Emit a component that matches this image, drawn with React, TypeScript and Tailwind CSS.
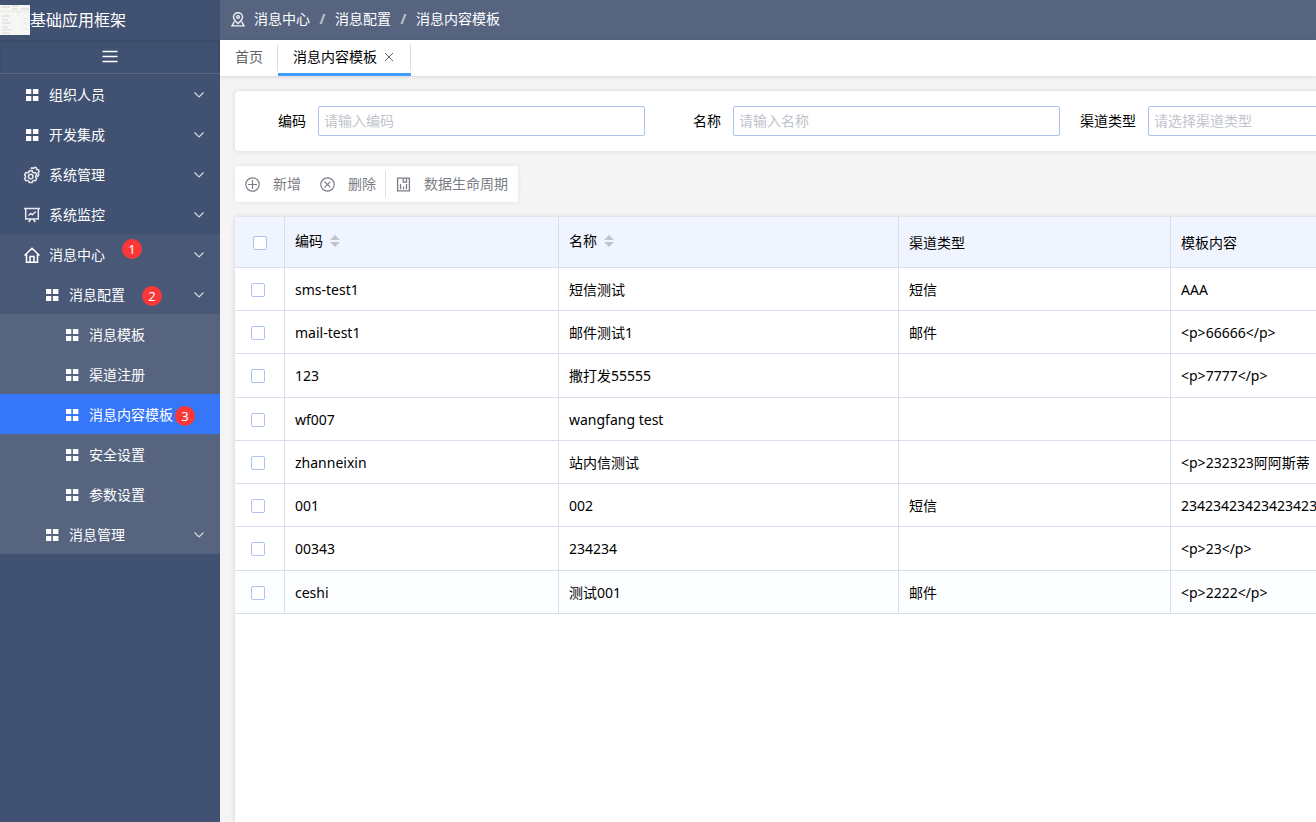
import React from 'react';

type IconName = 'grid' | 'gears' | 'monitor' | 'home';

interface MenuItem {
  label: string;
  icon: IconName;
  level: 1 | 2 | 3;
  tone: 'base' | 'open' | 'sub' | 'active';
  expandable?: boolean;
  badge?: number;
  badgeClass?: string;
}

const menu: MenuItem[] = [
  { label: '组织人员', icon: 'grid', level: 1, tone: 'base', expandable: true },
  { label: '开发集成', icon: 'grid', level: 1, tone: 'base', expandable: true },
  { label: '系统管理', icon: 'gears', level: 1, tone: 'base', expandable: true },
  { label: '系统监控', icon: 'monitor', level: 1, tone: 'base', expandable: true },
  { label: '消息中心', icon: 'home', level: 1, tone: 'open', expandable: true, badge: 1, badgeClass: 'left-[122px] top-[5px]' },
  { label: '消息配置', icon: 'grid', level: 2, tone: 'open', expandable: true, badge: 2, badgeClass: 'left-[142px] top-3' },
  { label: '消息模板', icon: 'grid', level: 3, tone: 'sub' },
  { label: '渠道注册', icon: 'grid', level: 3, tone: 'sub' },
  { label: '消息内容模板', icon: 'grid', level: 3, tone: 'active', badge: 3, badgeClass: 'left-[175px] top-3' },
  { label: '安全设置', icon: 'grid', level: 3, tone: 'sub' },
  { label: '参数设置', icon: 'grid', level: 3, tone: 'sub' },
  { label: '消息管理', icon: 'grid', level: 2, tone: 'sub', expandable: true },
];

const toneClass = {
  base: '',
  open: 'bg-[#485876]',
  sub: 'bg-[#566480]',
  active: 'bg-[#3577f8]',
};

const indentClass = { 1: 'pl-6', 2: 'pl-11', 3: 'pl-16' };

const rows = [
  { code: 'sms-test1', name: '短信测试', channel: '短信', content: 'AAA' },
  { code: 'mail-test1', name: '邮件测试1', channel: '邮件', content: '<p>66666</p>' },
  { code: '123', name: '撒打发55555', channel: '', content: '<p>7777</p>' },
  { code: 'wf007', name: 'wangfang test', channel: '', content: '' },
  { code: 'zhanneixin', name: '站内信测试', channel: '', content: '<p>232323阿阿斯蒂' },
  { code: '001', name: '002', channel: '短信', content: '23423423423423423' },
  { code: '00343', name: '234234', channel: '', content: '<p>23</p>' },
  { code: 'ceshi', name: '测试001', channel: '邮件', content: '<p>2222</p>' },
];

const MenuIcon = ({ name }: { name: IconName }) => {
  if (name === 'grid') {
    return (
      <svg viewBox="0 0 16 16" className="h-4 w-4 shrink-0" fill="#fff">
        <path d="M2 2h5.300v5H2zM8.900 2h5.500v5H8.900zM2 9h5.300v5H2zM8.900 9h5.500v5H8.900z" />
      </svg>
    );
  }
  if (name === 'gears') {
    return (
      <svg viewBox="0 0 16 16" className="h-4 w-4 shrink-0 overflow-visible" fill="none" stroke="#e8eaee" strokeWidth="1.5" strokeLinejoin="round">
        <path d="M5.200 3.800h3l.4 1.400 1.300.7 1.500-.4 1.300 2.300-1 1.200v1.300l1 1.200-1.300 2.300-1.500-.4-1.300.7-.4 1.400h-3l-.4-1.400-1.300-.7-1.500.4L.5 11.500l1-1.200V9L.5 7.800 1.800 5.500l1.500.4 1.500-.7z" />
        <circle cx="6.700" cy="9.600" r="2.300" />
        <path d="M6.800 2l1-1.200 1.500.7L10.900.300l1.600.7.300 1.600 1.900.5.300 1.800-1.100 1.200.9 1.600-.8 1.500-1.500.200" />
      </svg>
    );
  }
  if (name === 'monitor') {
    return (
      <svg viewBox="0 0 16 16" className="h-4 w-4 shrink-0" fill="none" stroke="#e8eaee" strokeWidth="1.5">
        <path d="M0 1.500h16M1.700 1.500v10.500h12.600V1.500M4.500 8.500l2.300-2 1.500 1.200L11.800 4.500M7 12l-2.300 3M9 12l2.300 3" />
      </svg>
    );
  }
  return (
    <svg viewBox="0 0 16 16" className="h-4 w-4 shrink-0" fill="none" stroke="#fff" strokeWidth="1.5">
      <path d="M.5 8.500L8 1.200l7.500 7.300M2.500 7v8.200h11V7M6 15V9.500h4V15" />
    </svg>
  );
};

const SortIcon = () => (
  <svg viewBox="0 0 10 12" className="h-3 w-[10px]" fill="#c0c4cc">
    <path d="M0 5L5 0l5 5zM0 7h10l-5 5z" />
  </svg>
);

const Checkbox = ({ label, className = '' }: { label: string; className?: string }) => (
  <input
    type="checkbox"
    aria-label={label}
    className={`block h-[14px] w-[14px] appearance-none rounded-[2px] border border-[#adc2ec] bg-white checked:bg-[#409eff] ${className}`}
  />
);

const Sidebar = () => (
  <aside className="flex w-[220px] shrink-0 flex-col bg-[#405172] text-white">
    <div className="flex h-10 items-center">
      <svg viewBox="0 0 30 30" className="h-[30px] w-[30px]">
        <rect width="30" height="30" fill="#f6f6f5" />
        <path d="M1 2h9M12 1h6M12 4h5M21 4h8" stroke="#dedfdd" strokeWidth="1.5" />
        <path d="M0 6.500h30" stroke="#e6ebe6" />
        <path d="M2 11h8M2 15h6M2 18h9M2 22h6M2 25h10M2 28h7" stroke="#d6d6d6" />
        <path d="M16 8h4M22 14h6M22 19h6M22 24h6" stroke="#ebebea" />
      </svg>
      <span className="text-base leading-5">基础应用框架</span>
    </div>
    <button aria-label="折叠菜单" className="flex h-[34px] items-center justify-center border-b border-[#566582] shadow-[inset_0_2px_3px_rgba(0,0,0,0.08)]">
      <svg viewBox="0 0 16 14" className="h-[14px] w-4" stroke="#fff" strokeWidth="1.4">
        <path d="M0.500 1.500h15M0.500 6.500h15M0.500 11.500h15" />
      </svg>
    </button>
    <nav>
      {menu.map((item) => (
        <a
          key={item.label}
          href="#"
          className={`relative flex h-10 items-center gap-[9px] pr-4 pt-px text-sm ${indentClass[item.level]} ${toneClass[item.tone]}`}
        >
          <MenuIcon name={item.icon} />
          <span>{item.label}</span>
          {item.badge && (
            <span className={`absolute flex h-5 w-5 items-center justify-center rounded-full bg-[#fb3838] text-[13px] leading-5 ${item.badgeClass}`}>
              {item.badge}
            </span>
          )}
          {item.expandable && (
            <svg viewBox="0 0 10 6" className="ml-auto h-[6px] w-[10px]" fill="none" stroke="#d5dae2" strokeWidth="1.2">
              <path d="M.5.500L5 5l4.500-4.500" />
            </svg>
          )}
        </a>
      ))}
    </nav>
  </aside>
);

const Breadcrumb = () => (
  <header className="flex h-10 shrink-0 items-center bg-[#566480] pb-0.5 pl-[11px] text-sm text-white">
    <svg viewBox="0 0 14 15" className="mr-[9px] h-[15px] w-[14px]" fill="none" stroke="#eef0f3" strokeWidth="1.4">
      <path d="M7 11.500C4.500 9.500 2.500 7.500 2.500 5a4.500 4.300 0 0 1 9 0c0 2.500-2 4.500-4.500 6.500z" />
      <circle cx="7" cy="5" r="1.400" />
      <path d="M3.500 9.500L.9 13.900h12.200L10.500 9.500" />
    </svg>
    <a href="#">消息中心</a>
    <span className="w-[25px] text-center font-bold text-[#c0c4cc]">/</span>
    <a href="#">消息配置</a>
    <span className="w-[25px] text-center font-bold text-[#c0c4cc]">/</span>
    <span>消息内容模板</span>
  </header>
);

const TabBar = () => (
  <div className="relative flex h-9 shrink-0 bg-white text-sm shadow-[0_1px_4px_rgba(0,0,0,0.12)]">
    <button className="flex items-center border-b-[3px] border-transparent pl-[15px] pr-[14px] text-[#606266]">首页</button>
    <span className="mt-[5px] h-[26px] w-px bg-[#d8dce5]" />
    <div className="flex items-center border-b-[3px] border-[#409eff]">
      <button className="px-[15px] text-black">消息内容模板</button>
      <button aria-label="关闭" className="-ml-2 mr-4">
        <svg viewBox="0 0 10 10" className="h-[10px] w-[10px]" stroke="#5f6368" strokeWidth="1">
          <path d="M1 1l8 8M9 1L1 9" />
        </svg>
      </button>
      <span className="h-[26px] w-px bg-[#d8dce5]" />
    </div>
  </div>
);

const SearchForm = () => (
  <form className="flex h-[60px] items-center rounded bg-white text-sm shadow-[0_0_5px_rgba(0,0,0,0.12)]">
    <div className="flex w-[415px] shrink-0 items-center">
      <label htmlFor="code" className="w-[83px] pr-3 text-right text-black">编码</label>
      <input id="code" placeholder="请输入编码" className="h-[30px] w-[327px] rounded-[2px] border border-[#adc2ec] px-[5px] pb-0.5 placeholder:text-[#c0c4cc]" />
    </div>
    <div className="flex w-[415px] shrink-0 items-center">
      <label htmlFor="name" className="w-[83px] pr-3 text-right text-black">名称</label>
      <input id="name" placeholder="请输入名称" className="h-[30px] w-[327px] rounded-[2px] border border-[#adc2ec] px-[5px] pb-0.5 placeholder:text-[#c0c4cc]" />
    </div>
    <div className="flex w-[415px] shrink-0 items-center">
      <label htmlFor="channel" className="w-[83px] pr-3 text-right text-black">渠道类型</label>
      <select id="channel" defaultValue="" className="h-[30px] w-[327px] appearance-none rounded-[2px] border border-[#adc2ec] px-[5px] text-[#c0c4cc]">
        <option value="">请选择渠道类型</option>
        <option value="sms">短信</option>
        <option value="mail">邮件</option>
      </select>
    </div>
  </form>
);

const Toolbar = () => (
  <div className="flex h-9 w-max items-center rounded-[2px] bg-white px-[10px] text-sm text-[#7b7d85] shadow-[0_0_5px_rgba(0,0,0,0.08)]">
    <button className="flex items-center gap-[13px]">
      <svg viewBox="0 0 15 15" className="h-[15px] w-[15px]" fill="none" stroke="currentColor" strokeWidth="1.2">
        <circle cx="7.500" cy="7.500" r="6.700" />
        <path d="M7.500 3v9M3 7.500h9" />
      </svg>
      新增
    </button>
    <button className="ml-[19px] flex items-center gap-[13px]">
      <svg viewBox="0 0 15 15" className="h-[15px] w-[15px]" fill="none" stroke="currentColor" strokeWidth="1.2">
        <circle cx="7.500" cy="7.500" r="6.700" />
        <path d="M4.600 4.600l5.800 5.800M10.400 4.600l-5.800 5.800" />
      </svg>
      删除
    </button>
    <span className="ml-[9px] mr-[10px] h-[26px] w-px bg-[#d6dfeb]" />
    <button className="flex items-center gap-[13px]">
      <svg viewBox="0 0 15 15" className="h-[15px] w-[15px]" fill="none" stroke="currentColor" strokeWidth="1.3">
        <path d="M1.600 1.200h11.800v12.600H1.600z" />
        <path d="M7.300 1.500v3.700h3.200V1.500M4.500 7v5.300M7.500 9.500v2.800M10.500 7v5.300" />
      </svg>
      数据生命周期
    </button>
  </div>
);

const DataTable = () => {
  const cell = 'border-b border-r border-[#d6dfeb] px-[10px]';

  return (
    <table className="w-[1336px] table-fixed border-separate border-spacing-0 text-left text-sm text-black">
      <colgroup>
        <col className="w-[50px]" />
        <col className="w-[274px]" />
        <col className="w-[340px]" />
        <col className="w-[272px]" />
        <col className="w-[400px]" />
      </colgroup>
      <thead>
        <tr className="h-[51px] bg-[#f0f4ff]">
          <th className={cell}>
            <Checkbox label="全选" className="ml-2 mt-0.5" />
          </th>
          <th className={`${cell} font-normal`}>
            <button className="flex items-center gap-[7px] pb-0.5">
              编码
              <SortIcon />
            </button>
          </th>
          <th className={`${cell} font-normal`}>
            <button className="flex items-center gap-[7px] pb-0.5">
              名称
              <SortIcon />
            </button>
          </th>
          <th className={`${cell} pt-0.5 font-normal`}>渠道类型</th>
          <th className={`${cell} pt-0.5 font-normal`}>模板内容</th>
        </tr>
      </thead>
      <tbody>
        {rows.map((row) => (
          <tr key={row.code} className="h-[43px] last:bg-[#fbfdff] [&:nth-child(4n+3)]:h-[44px]">
            <td className={cell}>
              <Checkbox label={row.code} className="ml-[6px] mt-px" />
            </td>
            <td className={`${cell} pt-px`}>{row.code}</td>
            <td className={`${cell} pt-px`}>{row.name}</td>
            <td className={`${cell} pt-px`}>{row.channel}</td>
            <td className={`${cell} pt-px`}>{row.content}</td>
          </tr>
        ))}
      </tbody>
    </table>
  );
};

export default function App() {
  return (
    <div className="flex h-screen overflow-hidden bg-[#f4f4f4] font-['Noto_Sans','Noto_Sans_CJK_SC',sans-serif]">
      <Sidebar />
      <main className="flex min-w-0 flex-1 flex-col">
        <Breadcrumb />
        <TabBar />
        <div className="flex min-h-0 flex-1 flex-col overflow-hidden pl-[15px] pt-[15px]">
          <div className="flex w-max min-w-full flex-1 flex-col gap-[15px]">
            <SearchForm />
            <Toolbar />
            <section className="flex-1 bg-white shadow-[0_0_5px_rgba(0,0,0,0.15)]">
              <DataTable />
            </section>
          </div>
        </div>
      </main>
    </div>
  );
}
